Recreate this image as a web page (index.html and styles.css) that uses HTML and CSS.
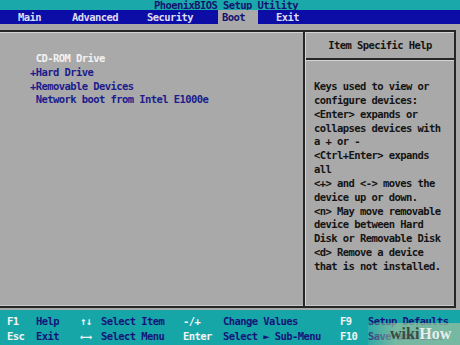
FILE: index.html
```html
<!DOCTYPE html>
<html lang="en">
<head>
    <meta charset="UTF-8">
    <meta name="viewport" content="width=device-width, initial-scale=1.0">
    <title>PhoenixBIOS Setup Utility</title>
    <link rel="stylesheet" href="styles.css">
</head>
<body>

<div class="screen">
    <div class="title">PhoenixBIOS Setup Utility</div>

    <div class="menu">
        <span class="menu-item main">Main</span>
        <span class="menu-item advanced">Advanced</span>
        <span class="menu-item security">Security</span>
        <span class="menu-item boot active">Boot</span>
        <span class="menu-item exit">Exit</span>
    </div>

    <div class="frame">
        <div class="boot-list">
            <div class="device selected"> CD-ROM Drive</div>
            <div class="device">+Hard Drive</div>
            <div class="device">+Removable Devices</div>
            <div class="device"> Network boot from Intel E1000e</div>
        </div>

        <div class="help">
            <div class="help-title">Item Specific Help</div>
            <div class="help-text">Keys used to view or
configure devices:
&lt;Enter&gt; expands or
collapses devices with
a + or -
&lt;Ctrl+Enter&gt; expands
all
&lt;+&gt; and &lt;-&gt; moves the
device up or down.
&lt;n&gt; May move removable
device between Hard
Disk or Removable Disk
&lt;d&gt; Remove a device
that is not installed.</div>
        </div>
    </div>

    <div class="keys">
        <span class="key">F1</span>
        <span class="desc">Help</span>
        <span class="key">↑↓</span>
        <span class="desc">Select Item</span>
        <span class="key">-/+</span>
        <span class="desc">Change Values</span>
        <span class="key">F9</span>
        <span class="desc">Setup Defaults</span>

        <span class="key">Esc</span>
        <span class="desc">Exit</span>
        <span class="key">←→</span>
        <span class="desc">Select Menu</span>
        <span class="key">Enter</span>
        <span class="desc">Select ► Sub-Menu</span>
        <span class="key">F10</span>
        <span class="desc">Save and Exit</span>
    </div>

    <div class="watermark"><b>wiki</b><span>How</span></div>
</div>

</body>
</html>
```

FILE: styles.css
```css
body {
    margin: 0;
    background-color: #a9a9a9;
    font-family: "DejaVu Sans Mono", "Liberation Mono", monospace;
    font-size: 10.5px;
    font-weight: bold;
    letter-spacing: -0.57px;
}

.screen {
    position: relative;
    width: 460px;
    height: 345px;
    overflow: hidden;
    background-color: #a9a9a9;
}

.title {
    height: 10px;
    line-height: 10px;
    padding-right: 8px;
    text-align: center;
    background-color: #1aa8aa;
    color: #141470;
    overflow: hidden;
}

.menu {
    display: flex;
    height: 14px;
    line-height: 14px;
    padding-left: 14px;
    background-color: #0c0ca6;
    color: #dcdcf4;
}

.menu-item {
    padding: 0 4px;
}

.advanced { margin-left: 23px; }
.security { margin-left: 21px; }
.boot { margin-left: 21px; padding-right: 13px; }
.exit { margin-left: 14px; }

.menu-item.active {
    background-color: #a9a9a9;
    color: #141470;
}

.frame {
    display: flex;
    height: 274px;
    margin: 6px 4px 0 0;
    border-top: 2px solid #262626;
    border-bottom: 2px solid #262626;
    border-right: 2px solid #262626;
    box-shadow: inset 0 1px 0 #d4d4d4, inset 0 -1px 0 #c8c8c8;
}

.boot-list {
    width: 305px;
    padding: 20px 0 0 30px;
    box-sizing: border-box;
    border-right: 2px solid #262626;
    line-height: 13.8px;
    color: #1c1c8c;
}

.device {
    white-space: pre;
}

.device.selected {
    color: #f2f2f2;
}

.help {
    flex: 1;
    border-left: 1px solid #d4d4d4;
    color: #141414;
}

.help-title {
    height: 26px;
    line-height: 26px;
    text-align: center;
    border-bottom: 2px solid #262626;
    box-shadow: 0 1px 0 #d4d4d4;
}

.help-text {
    padding: 20px 0 0 8px;
    line-height: 13.85px;
    white-space: pre;
}

.keys {
    display: grid;
    grid-template-columns: 29px 44px 21px 82px 40px 117px 28px 1fr;
    height: 30px;
    margin-top: 2px;
    padding: 5px 0 0 7px;
    line-height: 13.8px;
    background-color: #16a6a8;
    white-space: pre;
}

.key {
    color: #f4f4f4;
}

.desc {
    color: #14147a;
}

.watermark {
    position: absolute;
    right: 0;
    bottom: 0;
    width: 92px;
    height: 22px;
    padding-left: 22px;
    box-sizing: border-box;
    background: linear-gradient(90deg, rgba(150, 190, 160, 0.2), rgba(150, 190, 160, 0.75) 30%);
    font-family: "Liberation Serif", serif;
    font-size: 16px;
    letter-spacing: 0;
    line-height: 22px;
}

.watermark b {
    color: #3a4a40;
}

.watermark span {
    color: #e8eee8;
    font-weight: bold;
}
```
